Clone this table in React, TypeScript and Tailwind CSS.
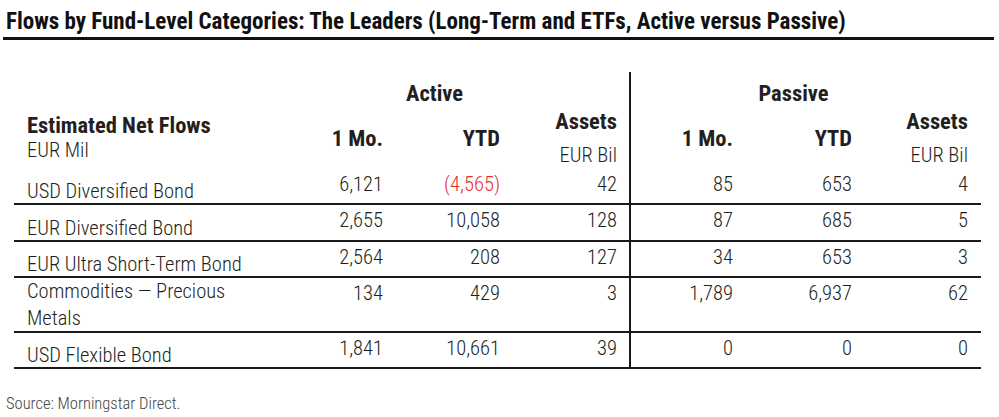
import React from "react";

type Row = {
  label: string;
  active: [string, string, string];
  passive: [string, string, string];
  height: string;
  leading: string;
  negYtd?: boolean;
};

const rows: Row[] = [
  { label: "USD Diversified Bond", active: ["6,121", "(4,565)", "42"], passive: ["85", "653", "4"], height: "h-[36px]", leading: "leading-[24px]", negYtd: true },
  { label: "EUR Diversified Bond", active: ["2,655", "10,058", "128"], passive: ["87", "685", "5"], height: "h-[37px]", leading: "leading-[24px]" },
  { label: "EUR Ultra Short-Term Bond", active: ["2,564", "208", "127"], passive: ["34", "653", "3"], height: "h-[36px]", leading: "leading-[24px]" },
  { label: "Commodities \u2014 Precious Metals", active: ["134", "429", "3"], passive: ["1,789", "6,937", "62"], height: "h-[55px]", leading: "leading-[27px]" },
  { label: "USD Flexible Bond", active: ["1,841", "10,661", "39"], passive: ["0", "0", "0"], height: "h-[36px]", leading: "leading-[24px]" },
];

const cols = "grid grid-cols-[265px_117px_117px_116px_117px_119px_116px]";

const Cell = ({ children, divider, red }: { children: React.ReactNode; divider?: boolean; red?: boolean }) => (
  <div
    className={`pt-[3px] pr-[13px] text-right leading-[24px] ${divider ? "border-l-2 border-[#1a1a1a]" : ""} ${red ? "text-[#e2302d]" : ""}`}
  >
    {children}
  </div>
);

export default function App() {
  return (
    <div className="h-[417px] w-[999px] bg-white font-['Roboto',sans-serif] font-stretch-condensed text-[#231f20]">
      {/* title */}
      <div className="mx-[3px] w-[991px] border-b-[3px] border-[#111] pt-[10px] pb-[3px]">
        <h1 className="pl-[3px] text-[23px] font-bold leading-[24px] text-[#111]">
          Flows by Fund-Level Categories: The Leaders (Long-Term and ETFs, Active versus Passive)
        </h1>
      </div>

      <div className="ml-[14px] mt-[32px] w-[967px] text-[20.5px]">
        {/* group header */}
        <div className={`${cols} h-[35px] text-[22.5px]`}>
          <div />
          <div className="col-span-3 flex items-end justify-center pb-[2px] pr-[39px] font-bold leading-[24px]">Active</div>
          <div className="col-span-3 flex items-end justify-center border-l-2 border-[#1a1a1a] pb-[2px] pr-[25px] font-bold leading-[24px]">
            Passive
          </div>
        </div>

        {/* column header */}
        <div className={`${cols} h-[62px] items-stretch`}>
          <div className="flex flex-col justify-center pl-[13px] leading-[25px]">
            <span className="text-[22.5px] font-bold">Estimated Net Flows</span>
            <span className="font-light">EUR Mil</span>
          </div>
          <div className="flex items-center justify-end pr-[13px] text-[22.5px] font-bold leading-[24px]">1 Mo.</div>
          <div className="flex items-center justify-end pr-[13px] text-[22.5px] font-bold leading-[24px]">YTD</div>
          <div className="flex flex-col items-end justify-center gap-[10px] pr-[12px] leading-[24px]">
            <span className="text-[22.5px] font-bold">Assets</span>
            <span className="font-light">EUR Bil</span>
          </div>
          <div className="flex items-center justify-end border-l-2 border-[#1a1a1a] pr-[13px] text-[22.5px] font-bold leading-[24px]">
            1 Mo.
          </div>
          <div className="flex items-center justify-end pr-[13px] text-[22.5px] font-bold leading-[24px]">YTD</div>
          <div className="flex flex-col items-end justify-center gap-[10px] pr-[13px] leading-[24px]">
            <span className="text-[22.5px] font-bold">Assets</span>
            <span className="font-light">EUR Bil</span>
          </div>
        </div>

        {/* data rows */}
        {rows.map((r) => (
          <div key={r.label} className={`${cols} ${r.height} border-b-2 border-[#1a1a1a] font-light`}>
            <div className={`flex items-end pl-[13px] pr-[20px] ${r.leading}`}>{r.label}</div>
            <Cell>{r.active[0]}</Cell>
            <Cell red={r.negYtd}>{r.active[1]}</Cell>
            <div className="pt-[3px] pr-[12px] text-right leading-[24px]">{r.active[2]}</div>
            <Cell divider>{r.passive[0]}</Cell>
            <Cell>{r.passive[1]}</Cell>
            <Cell>{r.passive[2]}</Cell>
          </div>
        ))}
      </div>

      <p className="mt-[26px] pl-[6px] text-[16.5px] font-light leading-[18px] text-[#444]">Source: Morningstar Direct.</p>
    </div>
  );
}
